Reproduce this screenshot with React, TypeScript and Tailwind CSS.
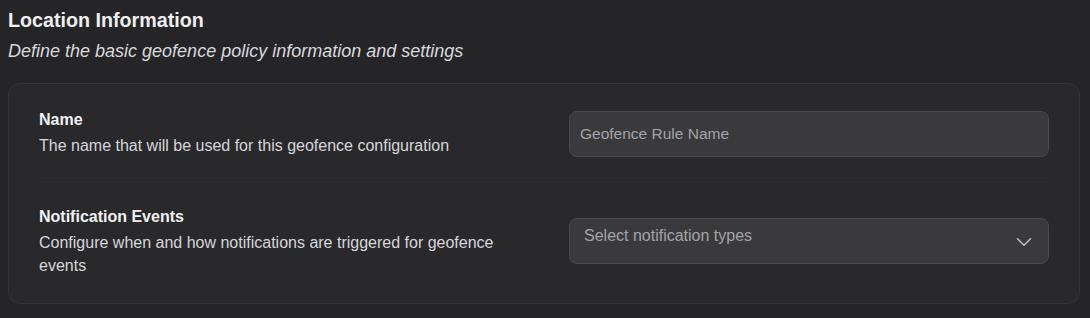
import React from "react";

function Chevron() {
  return (
    <svg width="26" height="26" viewBox="0 0 24 24" fill="none" stroke="currentColor" strokeWidth="1.5" strokeLinecap="round" strokeLinejoin="round">
      <path d="m6 9 6 6 6-6" />
    </svg>
  );
}

export default function App() {
  return (
    <div
      className="w-[1090px] h-[318px] bg-[#252527] px-2 pt-[6px] text-[#e8e8ea]"
      style={{ fontFamily: "'Liberation Sans', Arial, sans-serif" }}
    >
      <h2 className="text-[19.7px] leading-[28px] font-bold text-[#efeff1]">Location Information</h2>
      <p className="mt-[4px] text-[18px] leading-[27px] italic text-[#d9d9dd]">
        Define the basic geofence policy information and settings
      </p>
      <div className="mt-[18px] w-[1072px] rounded-xl border border-[#353538] bg-[#29292c] px-[30px]">
        <div className="flex items-start justify-between border-b border-[#303033] pt-[24px] pb-[24px]">
          <div className="w-[480px]">
            <div className="text-[16px] leading-[24px] font-bold text-[#f2f2f4]">Name</div>
            <div className="mt-[2px] text-[16px] leading-[23px] text-[#d6d6da]">
              The name that will be used for this geofence configuration
            </div>
          </div>
          <div className="mt-[3px] flex h-[46px] w-[480px] items-center rounded-lg border border-[#4a4a4e] bg-[#3a3a3d] px-[10px] text-[15.5px] leading-[24px] text-[#a4a4a8]">
            Geofence Rule Name
          </div>
        </div>
        <div className="flex items-start justify-between pt-[23px] pb-[26px]">
          <div className="w-[500px]">
            <div className="text-[16px] leading-[24px] font-bold text-[#f2f2f4]">Notification Events</div>
            <div className="mt-[2px] text-[16px] leading-[23px] text-[#d6d6da]">
              Configure when and how notifications are triggered for geofence events
            </div>
          </div>
          <div className="mt-[13px] flex h-[46px] w-[480px] items-start justify-between rounded-lg border border-[#4a4a4e] bg-[#3a3a3d] pl-[14px] pr-[11px] pt-[5px] text-[16px] leading-[24px] text-[#a4a4a8]">
            <span>Select notification types</span>
            <span className="mt-[5px] text-[#bcbcc0]"><Chevron /></span>
          </div>
        </div>
      </div>
    </div>
  );
}
